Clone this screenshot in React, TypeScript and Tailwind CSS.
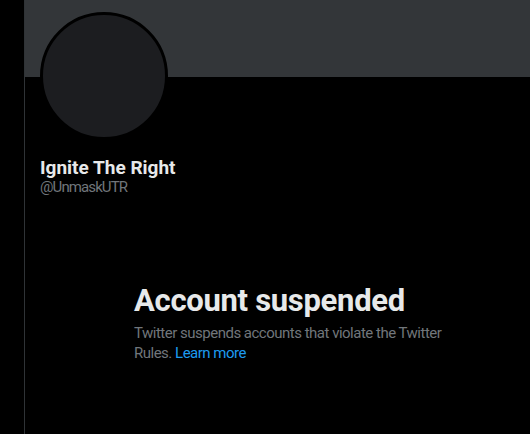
import React from "react";

export default function App() {
  return (
    <div className="flex h-[434px] w-[530px] overflow-hidden bg-black" style={{ fontFamily: "Roboto, 'Liberation Sans', sans-serif" }}>
      <div className="w-[24px] shrink-0 bg-black" />
      <div className="flex w-[506px] shrink-0 flex-col border-l border-[#2f3336]">
        <div className="h-[77px] w-full bg-[#333639]" />
        <div className="ml-[15px] mt-[-65px] h-[128px] w-[128px] rounded-full border-[3px] border-black bg-[#1c1d20]" />
        <div className="ml-[15px] mt-[16px] text-[19px] font-bold leading-[24px] text-[#e7e9ea]">Ignite The Right</div>
        <div className="ml-[15px] mt-[-3px] text-[15px] leading-[20px] tracking-[-0.9px] text-[#71767b]">@UnmaskUTR</div>
        <div className="ml-[109px] mt-[86px] w-[336px]">
          <div className="text-[31px] font-bold leading-[36px] tracking-[-0.3px] text-[#e7e9ea]">Account suspended</div>
          <div className="mt-[4px] text-[15px] leading-[20px] tracking-[-0.5px] text-[#71767b]">
            Twitter suspends accounts that violate the Twitter Rules.{" "}
            <span className="text-[#1d9bf0]">Learn more</span>
          </div>
        </div>
      </div>
    </div>
  );
}
